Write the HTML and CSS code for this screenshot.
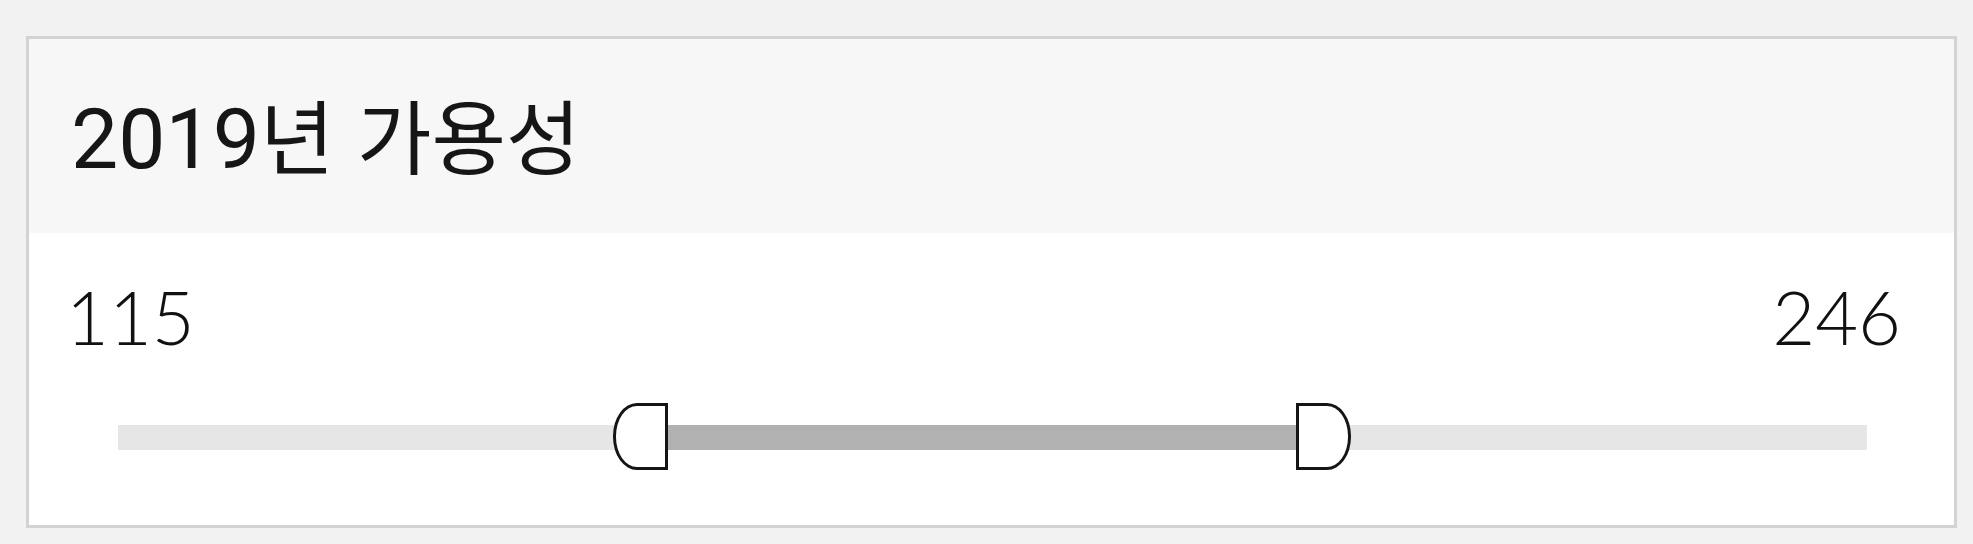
FILE: index.html
```html
<!DOCTYPE html>
<html lang="ko">
<head>
<meta charset="utf-8">
<title>2019년 가용성</title>
<link rel="stylesheet" href="styles.css">
</head>
<body>
  <section class="card">
    <header class="card-header">
      <h1 class="title">2019<span class="title-ko">년 가용성</span></h1>
    </header>
    <div class="card-body">
      <div class="range-values">
        <span class="range-value">115</span>
        <span class="range-value">246</span>
      </div>
      <div class="slider">
        <div class="track">
          <div class="track-fill" style="left:31.45%;width:35.9%"></div>
        </div>
        <div class="knob knob-left" style="left:calc(31.45% - 55px)"></div>
        <div class="knob knob-right" style="left:67.35%"></div>
      </div>
    </div>
  </section>
</body>
</html>
```

FILE: styles.css
```css
html, body {
  margin: 0;
  padding: 0;
}

body {
  background: #f2f2f2;
  width: 1973px;
  height: 544px;
  overflow: hidden;
  padding-top: 36px;
  box-sizing: border-box;
}

.card {
  margin: 0 16px 0 26px;
  border: 3px solid #d3d3d3;
  height: 492px;
  box-sizing: border-box;
  background: #ffffff;
  display: flex;
  flex-direction: column;
}

.card-header {
  background: #f7f7f7;
  height: 194px;
  padding-left: 42px;
  box-sizing: border-box;
  padding-top: 52px;
}

.title {
  margin: 0;
  font-family: "Roboto", "Noto Sans CJK KR", sans-serif;
  font-weight: 400;
  font-size: 84px;
  line-height: 84px;
  color: #161616;
  white-space: nowrap;
}

.title-ko {
  font-family: "Noto Sans CJK KR", sans-serif;
  font-weight: 400;
  font-size: 81px;
  line-height: 84px;
}

.card-body {
  flex: 1;
  padding: 48px 0 0 0;
}

.range-values {
  display: flex;
  justify-content: space-between;
  padding: 0 53px 0 37px;
  font-family: "Lato", "DejaVu Sans", sans-serif;
  font-weight: 300;
  font-size: 74px;
  line-height: 72px;
  color: #111111;
}

.slider {
  position: relative;
  margin: 50px 87px 0 89px;
  height: 67px;
}

.track {
  position: relative;
  top: 22px;
  height: 25px;
  background: #e6e6e6;
}

.track-fill {
  position: absolute;
  top: 0;
  bottom: 0;
  background: #b1b1b1;
}

.knob {
  position: absolute;
  top: 0;
  width: 55px;
  height: 67px;
  box-sizing: border-box;
  background: #ffffff;
  border: 3px solid #151515;
}

.knob-left {
  border-radius: 24px 0 0 24px / 33px 0 0 33px;
}

.knob-right {
  border-radius: 0 24px 24px 0 / 0 33px 33px 0;
}
```
